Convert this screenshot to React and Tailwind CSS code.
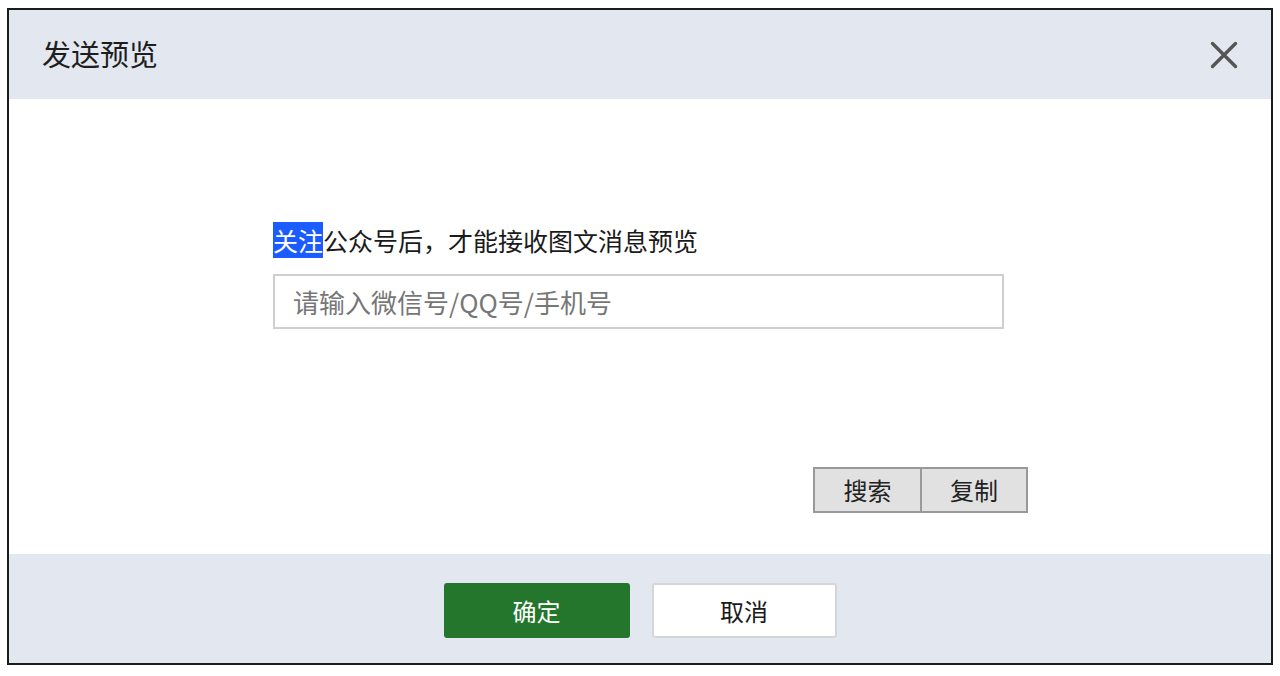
import React from "react";

const font = { fontFamily: '"Noto Sans CJK SC", "Noto Sans", sans-serif' };

const CloseIcon = () => (
    <svg width="28" height="28" viewBox="0 0 28 28" className="block">
        <path
            d="M2.5 2.5 L25.5 25.5 M25.5 2.5 L2.5 25.5"
            stroke="#555"
            strokeWidth="3.4"
            strokeLinecap="round"
        />
    </svg>
);

export default function App() {
    return (
        <div className="w-[1280px] h-[676px] bg-white pt-[8px] pl-[7px]" style={font}>
            <div className="w-[1266px] h-[657px] border-2 border-[#1c1c1c] flex flex-col">
                {/* Header */}
                <div className="h-[89px] bg-[#e3e7f0] flex items-center justify-between pl-[33px] pr-[33px] shrink-0">
                    <h2 className="text-[29px] leading-none text-[#1e1e1e] pb-[2px]">发送预览</h2>
                    <button className="w-[28px] h-[28px]">
                        <CloseIcon />
                    </button>
                </div>

                {/* Body */}
                <div className="h-[455px] bg-white pl-[264px] pt-[123px] shrink-0">
                    <p className="text-[25px] leading-[36px] text-[#1a1a1a]">
                        <span className="bg-[#1a5cff] text-white">关注</span>
                        公众号后，才能接收图文消息预览
                    </p>
                    <input
                        type="text"
                        placeholder="请输入微信号/QQ号/手机号"
                        className="mt-[16px] w-[731px] h-[55px] border-2 border-[#cfcfcf] px-[18px] text-[26px] text-[#222] placeholder:text-[#777] outline-none"
                        style={font}
                    />
                    <div className="mt-[138px] w-[755px] flex justify-end">
                        <div className="flex border-2 border-[#999] bg-[#e1e1e1] h-[46px]">
                            <button className="w-[107px] text-[24px] text-[#222] border-r-2 border-[#999]">
                                搜索
                            </button>
                            <button className="w-[104px] text-[24px] text-[#222]">
                                复制
                            </button>
                        </div>
                    </div>
                </div>

                {/* Footer */}
                <div className="flex-1 bg-[#e3e7f0] flex justify-center gap-[22px] pt-[29px]">
                    <button className="w-[186px] h-[55px] rounded-[3px] bg-[#23762b] text-white text-[24px]">
                        确定
                    </button>
                    <button className="w-[185px] h-[55px] rounded-[3px] bg-white border-2 border-[#d4d6dc] text-[#1a1a1a] text-[24px]">
                        取消
                    </button>
                </div>
            </div>
        </div>
    );
}
